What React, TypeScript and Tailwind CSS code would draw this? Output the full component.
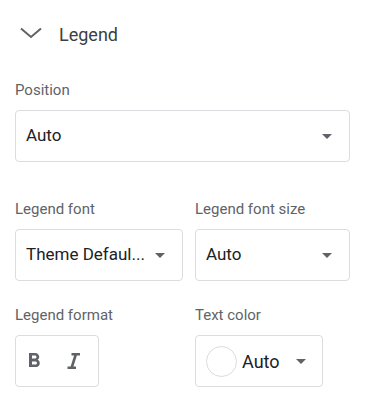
import React from "react";

const Caret = () => (
  <svg width="10" height="5" viewBox="0 0 10 5" className="shrink-0">
    <path d="M0 0h10L5 5z" fill="#5f6368" />
  </svg>
);

const Label = ({ children }: { children: React.ReactNode }) => (
  <div className="h-5 text-[15px] leading-5 text-[#5f6368]">{children}</div>
);

const Select = ({ value, className = "" }: { value: string; className?: string }) => (
  <div
    className={`flex h-[52px] items-center rounded-[4px] border border-[#dadce0] pl-[10px] pr-[17px] ${className}`}
  >
    <span className="min-w-0 flex-1 truncate text-[17px] text-[#202124]">{value}</span>
    <Caret />
  </div>
);

export default function App() {
  return (
    <div
      className="h-[408px] w-[370px] bg-white px-[15px] pt-[22px]"
      style={{ fontFamily: "Roboto, 'Liberation Sans', sans-serif" }}
    >
      <div className="flex h-6 items-center">
        <svg width="24" height="24" viewBox="0 0 24 24" className="ml-[4px]">
          <path d="M2 6.5l10 8.5 10-8.5" fill="none" stroke="#5f6368" strokeWidth="2" />
        </svg>
        <span className="ml-[16px] text-[18px] text-[#3c4043]">Legend</span>
      </div>

      <div className="mt-[34px]">
        <Label>Position</Label>
        <Select value="Auto" className="mt-[10px] w-[335px]" />
      </div>

      <div className="mt-[37px] grid grid-cols-[168px_155px] gap-x-[12px]">
        <div>
          <Label>Legend font</Label>
          <Select value="Theme Defaul..." className="mt-[10px] pr-[15px]" />
        </div>
        <div>
          <Label>Legend font size</Label>
          <Select value="Auto" className="mt-[10px]" />
        </div>
      </div>

      <div className="mt-[24px] grid grid-cols-[168px_155px] gap-x-[12px]">
        <div>
          <Label>Legend format</Label>
          <div className="mt-[10px] flex h-[52px] w-[84px] items-center gap-[16px] rounded-[4px] border border-[#dadce0] pl-[6px]">
            <svg width="24" height="24" viewBox="0 0 24 24">
              <path
                fill="#5f6368"
                d="M15.6 10.79c.97-.67 1.65-1.77 1.65-2.79 0-2.26-1.75-4-4-4H7v14h7.04c2.09 0 3.71-1.7 3.71-3.79 0-1.52-.86-2.82-2.15-3.42zM10 6.5h3c.83 0 1.5.67 1.5 1.5s-.67 1.5-1.5 1.5h-3v-3zm3.5 9H10v-3h3.5c.83 0 1.5.67 1.5 1.5s-.67 1.5-1.5 1.5z"
              />
            </svg>
            <svg width="24" height="24" viewBox="0 0 24 24">
              <path fill="#5f6368" d="M9.5 4v2.5h2.6L8.6 17.5H5.5V20h8.5v-2.5h-2.6l3.5-11h3.1V4z" />
            </svg>
          </div>
        </div>
        <div>
          <Label>Text color</Label>
          <div className="mt-[10px] flex h-[52px] w-[128px] items-center rounded-[4px] border border-[#dadce0] pl-[10px] pr-[16px]">
            <span className="h-[31px] w-[31px] shrink-0 rounded-full border border-[#dadce0] bg-white" />
            <span className="ml-[5px] flex-1 text-[18px] text-[#202124]">Auto</span>
            <Caret />
          </div>
        </div>
      </div>
    </div>
  );
}
